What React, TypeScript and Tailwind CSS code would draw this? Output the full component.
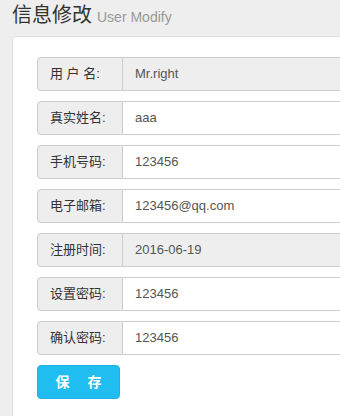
const fields: { label: string; value: string; readOnly?: boolean }[] = [
  { label: '用 户 名:', value: 'Mr.right', readOnly: true },
  { label: '真实姓名:', value: 'aaa' },
  { label: '手机号码:', value: '123456' },
  { label: '电子邮箱:', value: '123456@qq.com' },
  { label: '注册时间:', value: '2016-06-19', readOnly: true },
  { label: '设置密码:', value: '123456' },
  { label: '确认密码:', value: '123456' },
]

const font = { fontFamily: '"Liberation Sans", Arial, "Noto Sans CJK SC", sans-serif' }

export default function App() {
  return (
    <div className="w-[340px] h-[416px] overflow-hidden bg-[#eeeeee]" style={font}>
      <div className="h-[30px] px-[12px] leading-[30px] whitespace-nowrap">
        <span className="text-[20px] text-[#333333]">信息修改</span>
        <span className="ml-[5px] text-[14px] text-[#999999]">User Modify</span>
      </div>
      <div className="ml-[12px] mt-[6px] w-[400px] h-[400px] bg-white border border-[#dddddd] rounded-[4px] pl-[24px] pt-[20px]">
        {fields.map((f) => (
          <div key={f.label} className="flex h-[34px] mb-[10px]">
            <div className="w-[86px] shrink-0 flex items-center pl-[12px] bg-[#eeeeee] border border-[#cccccc] rounded-l-[4px] text-[13px] text-[#333333] whitespace-pre">
              {f.label}
            </div>
            <div
              className={`flex-1 flex items-center px-[12px] border border-l-0 border-[#cccccc] text-[13px] text-[#555555] ${f.readOnly ? 'bg-[#eeeeee]' : 'bg-white'}`}
            >
              {f.value}
            </div>
          </div>
        ))}
        <button
          type="button"
          className="w-[83px] h-[34px] flex items-center justify-center gap-[18px] bg-[#20bdf0] border border-[#1cb2e3] rounded-[4px] text-white text-[14px] font-bold"
        >
          <span>保</span>
          <span>存</span>
        </button>
      </div>
    </div>
  )
}
